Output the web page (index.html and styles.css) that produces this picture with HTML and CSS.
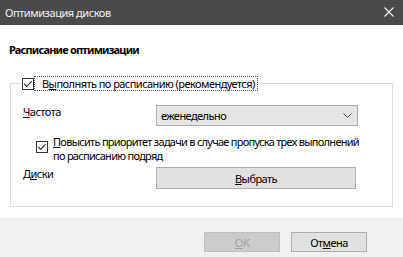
FILE: index.html
```html
<!DOCTYPE html>
<html lang="ru">
<head>
  <meta charset="UTF-8">
  <title>Оптимизация дисков</title>
  <link rel="stylesheet" href="styles.css">
</head>
<body>
  <div class="window">
    <div class="titlebar">
      <span class="title">Оптимизация дисков</span>
      <svg class="close" width="10" height="10" viewBox="0 0 10 10">
        <path d="M0.5 0.5 L9.5 9.5 M9.5 0.5 L0.5 9.5" stroke="#f0f0f0" stroke-width="1.2"/>
      </svg>
    </div>

    <div class="content">
      <h1 class="heading">Расписание оптимизации</h1>

      <fieldset class="group">
        <legend class="group-head">
          <span class="check">
            <svg width="12" height="12" viewBox="0 0 12 12">
              <rect x="0.5" y="0.5" width="11" height="11" fill="#fff" stroke="#333"/>
              <path d="M2.3 6 L4.7 8.4 L9.8 3.2" fill="none" stroke="#333" stroke-width="1.1"/>
            </svg>
          </span>
          <span class="focus">В<u>ы</u>полнять по расписанию (рекомендуется)</span>
        </legend>

        <div class="field first">
          <span class="label"><u>Ч</u>астота</span>
          <div class="combo">
            <span>еженедельно</span>
            <svg width="9" height="5" viewBox="0 0 9 5">
              <path d="M0.5 0.5 L4.5 4.5 L8.5 0.5" fill="none" stroke="#444"/>
            </svg>
          </div>
        </div>

        <div class="option">
          <span class="check">
            <svg width="12" height="12" viewBox="0 0 12 12">
              <rect x="0.5" y="0.5" width="11" height="11" fill="#fff" stroke="#333"/>
              <path d="M2.3 6 L4.7 8.4 L9.8 3.2" fill="none" stroke="#333" stroke-width="1.1"/>
            </svg>
          </span>
          <span class="option-text"><u>П</u>овысить приоритет задачи в случае пропуска трех выполнений<br>по расписанию подряд</span>
        </div>

        <div class="field">
          <span class="label">Д<u>и</u>ски</span>
          <button class="btn wide"><u>В</u>ыбрать</button>
        </div>
      </fieldset>
    </div>

    <div class="footer">
      <button class="btn" disabled><u>O</u>K</button>
      <button class="btn">От<u>м</u>ена</button>
    </div>
  </div>
</body>
</html>
```

FILE: styles.css
```css
* {
  margin: 0;
  padding: 0;
  box-sizing: border-box;
}

html, body {
  width: 403px;
  height: 257px;
  overflow: hidden;
  background: #fff;
  font-family: 'Noto Sans', 'Open Sans', sans-serif;
  font-size: 11px;
  letter-spacing: -0.55px;
  color: #000;
}

.window {
  display: flex;
  flex-direction: column;
  height: 257px;
}

.titlebar {
  height: 25px;
  background: #4a4a4a;
  color: #f2f2f2;
  display: flex;
  align-items: center;
  justify-content: space-between;
  padding: 0 9px 1px 5px;
  letter-spacing: -0.45px;
}

.content {
  flex: 1;
  padding: 17px 13px 0 9px;
}

.heading {
  font-size: 11px;
  font-weight: bold;
  line-height: 16px;
  letter-spacing: -0.8px;
  margin-bottom: 19px;
}

.group {
  border: 1px solid #dcdcdc;
  margin-left: 1px;
  padding: 0 33px 0 12px;
  height: 130px;
}

.group-head {
  display: flex;
  align-items: center;
  margin-left: -2px;
  padding: 0 1px;
  line-height: 14px;
}

.check {
  display: flex;
  width: 12px;
  height: 12px;
}

.focus {
  outline: 1px dotted #555;
  margin-left: 1px;
  padding: 0 2px 0 7px;
  line-height: 13px;
}

.field {
  display: flex;
  align-items: flex-start;
  margin-top: 4px;
}

.field.first {
  margin-top: 15px;
}

.label {
  width: 133px;
  line-height: 14px;
}

.combo {
  width: 202px;
  height: 21px;
  background: #e5e5e5;
  border: 1px solid #adadad;
  display: flex;
  align-items: center;
  justify-content: space-between;
  padding: 0 5px 0 4px;
}

.option {
  display: flex;
  align-items: flex-start;
  margin: 9px 0 0 13px;
  white-space: nowrap;
}

.option .check {
  margin-top: 6px;
  margin-right: 5px;
}

.option-text {
  line-height: 14px;
  letter-spacing: -0.72px;
}

.btn {
  font-family: inherit;
  font-size: 11px;
  letter-spacing: inherit;
  color: #000;
  background: #e1e1e1;
  border: 1px solid #adadad;
  width: 76px;
  height: 20px;
}

.btn.wide {
  width: 200px;
  height: 22px;
}

.btn:disabled {
  background: #cccccc;
  border-color: #bfbfbf;
  color: #a0a0a0;
}

.footer {
  height: 39px;
  background: #f0f0f0;
  display: flex;
  justify-content: flex-end;
  align-items: flex-start;
  gap: 11px;
  padding: 14px 36px 0 0;
}
```
